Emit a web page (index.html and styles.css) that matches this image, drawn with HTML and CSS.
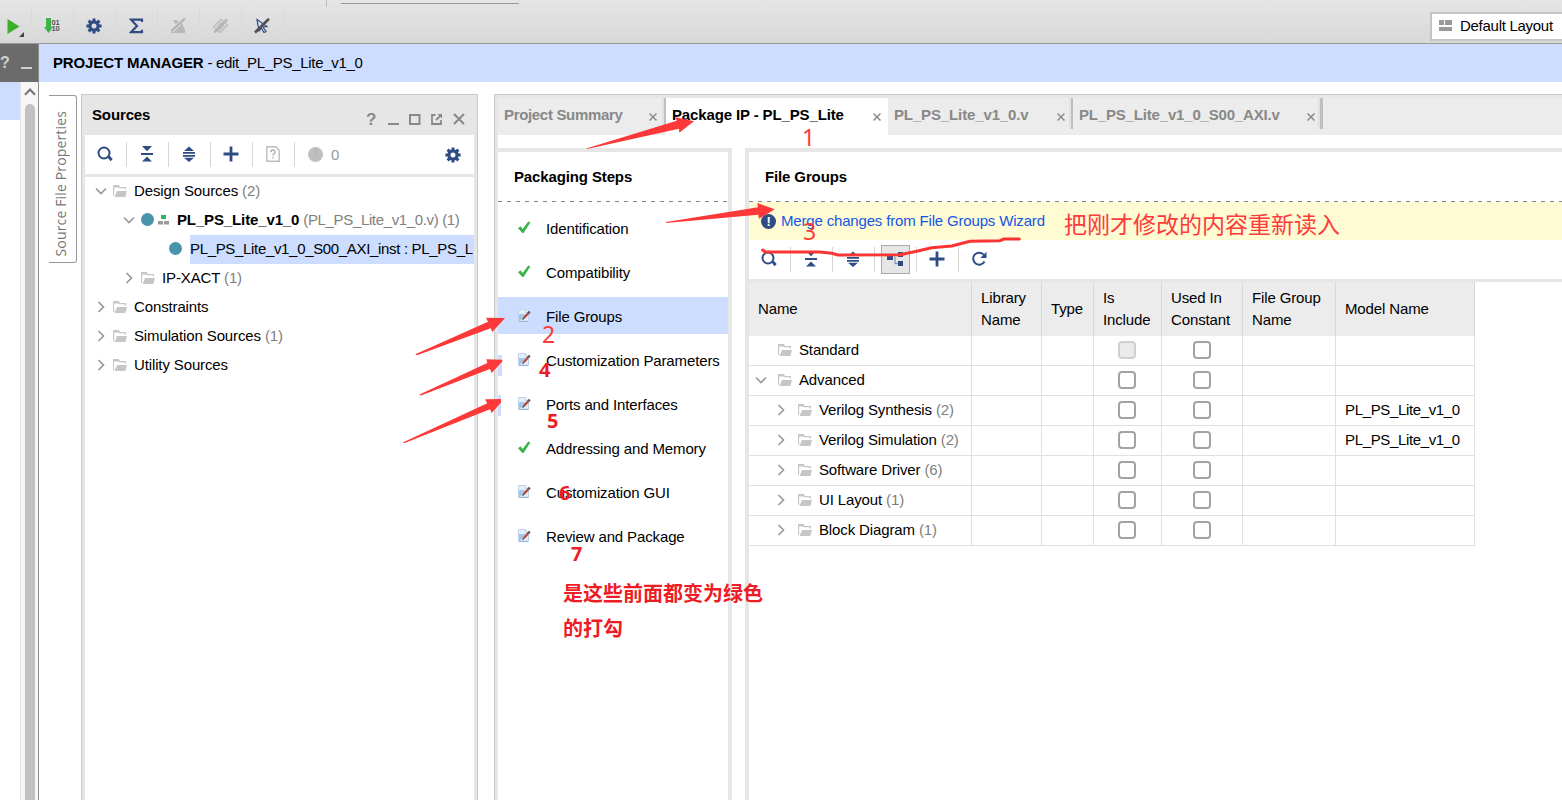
FILE: index.html
```
<!DOCTYPE html>
<html lang="en">
<head>
    <meta charset="UTF-8">
    <meta name="viewport" content="width=device-width, initial-scale=1.0">
    <title>edit_PL_PS_Lite_v1_0</title>
    <link rel="stylesheet" href="styles.css">
</head>
<body>
    <!-- shared icons -->
    <svg class="sprite">
        <symbol id="search" viewBox="0 0 16 16"><circle cx="7" cy="7" r="5.5" fill="none" stroke="currentColor" stroke-width="2"/><path d="M10.500 11.200l2.200-1.400 3 3.200-2.200 2.200z" fill="currentColor"/></symbol>
        <symbol id="collapse" viewBox="0 0 14 16"><path d="M2 0h10L7 5.200zM1 7h12v2H1zM2 15.500h10L7 10.500z" fill="currentColor"/></symbol>
        <symbol id="expand" viewBox="0 0 14 16"><path d="M7 .5L12 5H2zM1 6h12v1.700H1zM1 9h12v1.700H1zM2 11.700h10L7 16z" fill="currentColor"/></symbol>
        <symbol id="plus" viewBox="0 0 16 16"><path d="M6.600 .5h2.800v6.100h6.100v2.800H9.400v6.100H6.600V9.400H.5V6.600h6.100z" fill="currentColor"/></symbol>
        <symbol id="gear" viewBox="0 0 16 16"><circle cx="8" cy="8" r="4.100" fill="none" stroke="currentColor" stroke-width="3.200"/><path d="M8 .4v3M8 12.600v3M.4 8h3M12.600 8h3M2.600 2.600l2 2M11.400 11.400l2 2M2.600 13.400l2-2M11.400 4.600l2-2" stroke="currentColor" stroke-width="3"/></symbol>
        <symbol id="folder" viewBox="0 0 14 12"><path d="M.5 11V.8h5l1 1.800h5.800v2" fill="none" stroke="#c6c6c6" stroke-width="1.300"/><path d="M.5 0h5l1.200 2.600H.5zM4 6h10l-1.600 6H1.600z" fill="#c6c6c6"/></symbol>
        <symbol id="down" viewBox="0 0 12 12"><path d="M1 3.500l5 5 5-5" fill="none" stroke="#999" stroke-width="1.700"/></symbol>
        <symbol id="right" viewBox="0 0 12 12"><path d="M3.500 1l5 5-5 5" fill="none" stroke="#999" stroke-width="1.700"/></symbol>
        <symbol id="check" viewBox="0 0 14 13"><path d="M0 7.200L2.700 5.200l2.400 2.800L11 0l2.300 1L6 12.400H4.700z" fill="#3cb24c"/></symbol>
        <symbol id="edit" viewBox="0 0 13 13"><path d="M.5 .5h7l3 3v9H.5z" fill="#e3effa" stroke="#bdd2e6"/><path d="M1 5h6v3l-6 4z" fill="#a5c8e8"/><path d="M1 12.300h9" stroke="#8fb0cf"/><path d="M7.500 .5v3h3" fill="#fff" stroke="#bdd2e6"/><path d="M6 9l4.600-5.200" stroke="#b5483f" stroke-width="2.200"/><path d="M10.500 4l1.300-1.500" stroke="#4b5364" stroke-width="2.200"/><path d="M4.500 10.700L6 9" stroke="#444" stroke-width="1.200"/></symbol>
        <symbol id="close" viewBox="0 0 8 8"><path d="M.5 .5l7 7M7.500 .5l-7 7" stroke="#8a8a8a" stroke-width="1.500"/></symbol>
    </svg>

    <header class="topbar">
        <div class="menu-edge"><span class="menu-tick"></span><span class="menu-line"></span></div>
        <div class="toolbar">
            <div class="tool run">
                <svg width="25" height="24" viewBox="0 0 25 24"><path d="M7.500 5l12 7.500-12 7.500z" fill="#3fae2a"/><path d="M24 18v5h-5z" fill="#444"/></svg>
            </div>
            <div class="tool">
                <svg width="16" height="16" viewBox="0 0 16 16"><path d="M2 0h5v9h2l-4.500 6L0 9h2z" fill="#3cb44a"/><text class="bits" x="7.500" y="6.500">01</text><text class="bits" x="7.500" y="13">10</text></svg>
            </div>
            <div class="tool"><svg width="16" height="16"><use href="#gear"/></svg></div>
            <div class="tool">
                <svg width="15" height="16" viewBox="0 0 15 16"><path d="M13 4V1.600H2L8 8l-6 6.200h11V11.800" fill="none" stroke="#2f4d84" stroke-width="2.200"/></svg>
            </div>
            <div class="tool">
                <svg width="17" height="16" viewBox="0 0 17 16"><path d="M1 11.500h14V15H1zM3 2h4l6 6 2 4H4l3-4zM9 4h4v4z" fill="#b8b8b8"/><path d="M2 12.500L15 .5" stroke="#dcdcdc" stroke-width="4"/><path d="M2 12.500L15 .5" stroke="#b0b0b0" stroke-width="2"/></svg>
            </div>
            <div class="tool">
                <svg width="17" height="16" viewBox="0 0 17 16"><path d="M1.500 9L9 1.500l6.500 5.500L8 14.500zM5 9l4-4 3 2.500-4 4z" fill="none" stroke="#bcbcbc" stroke-width="1.300"/><path d="M2.500 14.500L15 1.500" stroke="#b0b0b0" stroke-width="2.200"/></svg>
            </div>
            <div class="tool">
                <svg width="16" height="16" viewBox="0 0 16 16"><path d="M3 1.500l10 7-4 .5 3 4.500-2 1-2.500-4.300L5 13z" fill="#dbe4f3" stroke="#2f4d84" stroke-width="1.200"/><path d="M1 14.500L15 .8" stroke="#4e4e4e" stroke-width="2.600"/></svg>
            </div>
            <div class="layout-select">
                <svg width="13" height="11" viewBox="0 0 13 11"><path d="M0 0h5v5H0zM6 0h7v5H6zM0 7h13v4H0z" fill="#999"/></svg>
                <span>Default Layout</span>
            </div>
        </div>
    </header>

    <div class="workspace">
        <aside class="navigator">
            <div class="nav-head"><b>?</b><i></i></div>
            <div class="nav-body">
                <div class="nav-selected"></div>
                <div class="scrollbar">
                    <svg width="12" height="8" viewBox="0 0 12 8"><path d="M1 6.800L6 1.600l5 5.200" fill="none" stroke="#777" stroke-width="2.200"/></svg>
                    <div class="thumb"></div>
                </div>
            </div>
        </aside>

        <main class="manager">
            <div class="manager-title"><b>PROJECT MANAGER</b>&nbsp;- edit_PL_PS_Lite_v1_0</div>
            <div class="panels">
                <div class="side-tab"><span>Source File Properties</span></div>

                <section class="sources">
                    <div class="sources-head">
                        <b>Sources</b>
                        <div class="window-buttons">
                            <b>?</b>
                            <svg width="11" height="12" viewBox="0 0 11 12"><path d="M0 11h11" stroke="#888" stroke-width="2"/></svg>
                            <svg width="12" height="12" viewBox="0 0 12 12"><path d="M1 2h9.500v9H1z" fill="none" stroke="#888" stroke-width="2"/></svg>
                            <svg width="12" height="12" viewBox="0 0 12 12"><path d="M4.500 2H1v9h9V7M5 7l4-4" fill="none" stroke="#888" stroke-width="1.800"/><path d="M6.500 1H11v4.500z" fill="#888"/></svg>
                            <svg width="12" height="12" viewBox="0 0 12 12"><path d="M1 1l10 10M11 1L1 11" stroke="#888" stroke-width="2"/></svg>
                        </div>
                    </div>
                    <div class="icon-bar">
                        <div class="cell"><svg width="16" height="16"><use href="#search"/></svg></div>
                        <div class="cell"><svg width="14" height="16"><use href="#collapse"/></svg></div>
                        <div class="cell"><svg width="14" height="16"><use href="#expand"/></svg></div>
                        <div class="cell"><svg width="16" height="16"><use href="#plus"/></svg></div>
                        <div class="cell">
                            <svg width="14" height="16" viewBox="0 0 14 16"><path d="M.8 .8h9l3.400 3.400v11H.8z" fill="none" stroke="#bbb" stroke-width="1.400"/><path d="M4.800 6.200c0-3 4.400-3 4.400-.2 0 1.800-2.200 1.800-2.200 3.800M7 11v1.600" fill="none" stroke="#aaa" stroke-width="1.400"/></svg>
                        </div>
                        <div class="messages"><i>!</i>0</div>
                        <svg class="settings" width="16" height="16"><use href="#gear"/></svg>
                    </div>
                    <div class="tree">
                        <div class="node"><svg class="arrow"><use href="#down"/></svg><svg class="folder"><use href="#folder"/></svg>Design Sources <em>(2)</em></div>
                        <div class="node level-1">
                            <svg class="arrow"><use href="#down"/></svg><i class="dot"></i>
                            <svg class="top-module" width="11" height="10" viewBox="0 0 11 10"><path d="M3 0h5v4H3z" fill="#2fb457"/><path d="M0 6h5v3.500H0zM6 6h5v3.500H6z" fill="#999"/></svg>
                            <b>PL_PS_Lite_v1_0</b><em class="file">(PL_PS_Lite_v1_0.v) (1)</em>
                        </div>
                        <div class="node level-2"><i class="dot"></i><span class="selected">PL_PS_Lite_v1_0_S00_AXI_inst : PL_PS_L</span></div>
                        <div class="node level-1"><svg class="arrow"><use href="#right"/></svg><svg class="folder"><use href="#folder"/></svg>IP-XACT <em>(1)</em></div>
                        <div class="node"><svg class="arrow"><use href="#right"/></svg><svg class="folder"><use href="#folder"/></svg>Constraints</div>
                        <div class="node"><svg class="arrow"><use href="#right"/></svg><svg class="folder"><use href="#folder"/></svg>Simulation Sources <em>(1)</em></div>
                        <div class="node"><svg class="arrow"><use href="#right"/></svg><svg class="folder"><use href="#folder"/></svg>Utility Sources</div>
                    </div>
                </section>

                <section class="editor">
                    <nav class="tabs">
                        <div class="tab summary">Project Summary<svg><use href="#close"/></svg></div>
                        <div class="tab package active">Package IP - PL_PS_Lite<svg><use href="#close"/></svg></div>
                        <div class="tab verilog">PL_PS_Lite_v1_0.v<svg><use href="#close"/></svg></div>
                        <div class="tab axi">PL_PS_Lite_v1_0_S00_AXI.v<svg><use href="#close"/></svg></div>
                    </nav>
                    <div class="package-ip">
                        <div class="steps">
                            <h2>Packaging Steps</h2>
                            <ul>
                                <li><svg><use href="#check"/></svg>Identification</li>
                                <li><svg><use href="#check"/></svg>Compatibility</li>
                                <li class="current"><svg><use href="#edit"/></svg>File Groups</li>
                                <li><svg><use href="#edit"/></svg>Customization Parameters</li>
                                <li><svg><use href="#edit"/></svg>Ports and Interfaces</li>
                                <li><svg><use href="#check"/></svg>Addressing and Memory</li>
                                <li><svg><use href="#edit"/></svg>Customization GUI</li>
                                <li><svg><use href="#edit"/></svg>Review and Package</li>
                            </ul>
                        </div>
                        <div class="groups">
                            <h2>File Groups</h2>
                            <div class="merge"><i>!</i><a>Merge changes from File Groups Wizard</a></div>
                            <div class="icon-bar">
                                <div class="cell"><svg width="16" height="16"><use href="#search"/></svg></div>
                                <div class="cell"><svg width="14" height="16"><use href="#collapse"/></svg></div>
                                <div class="cell"><svg width="14" height="16"><use href="#expand"/></svg></div>
                                <div class="cell">
                                    <div class="pressed"><svg width="16" height="16" viewBox="0 0 16 16"><path d="M0 4h6v5H0zM11 1h5v5h-5zM11 10h5v5h-5z" fill="#2f4d84"/><path d="M8 6v6.500h3M6 4.500h3M7.500 3.500H11" fill="none" stroke="#8c9dbd" stroke-width="1.300"/></svg></div>
                                </div>
                                <div class="cell"><svg width="16" height="16"><use href="#plus"/></svg></div>
                                <div class="cell last"><svg width="16" height="16" viewBox="0 0 16 16"><path d="M13 4A6 6 0 1 0 13.500 10.500" fill="none" stroke="#2f4d84" stroke-width="2"/><path d="M15.500 .8V7H9.300z" fill="#2f4d84"/></svg></div>
                            </div>
                            <div class="table">
                                <div class="row table-head">
                                    <div>Name</div><div>Library<br>Name</div><div>Type</div><div>Is<br>Include</div><div>Used In<br>Constant</div><div>File Group<br>Name</div><div>Model Name</div>
                                </div>
                                <div class="row"><div><i class="blank"></i><svg class="folder"><use href="#folder"/></svg>Standard</div><div></div><div></div><div class="box"><i class="disabled"></i></div><div class="box"><i></i></div><div></div><div></div></div>
                                <div class="row"><div><svg class="arrow"><use href="#down"/></svg><svg class="folder"><use href="#folder"/></svg>Advanced</div><div></div><div></div><div class="box"><i></i></div><div class="box"><i></i></div><div></div><div></div></div>
                                <div class="row child"><div><svg class="arrow"><use href="#right"/></svg><svg class="folder"><use href="#folder"/></svg>Verilog Synthesis <em>(2)</em></div><div></div><div></div><div class="box"><i></i></div><div class="box"><i></i></div><div></div><div class="model">PL_PS_Lite_v1_0</div></div>
                                <div class="row child"><div><svg class="arrow"><use href="#right"/></svg><svg class="folder"><use href="#folder"/></svg>Verilog Simulation <em>(2)</em></div><div></div><div></div><div class="box"><i></i></div><div class="box"><i></i></div><div></div><div class="model">PL_PS_Lite_v1_0</div></div>
                                <div class="row child"><div><svg class="arrow"><use href="#right"/></svg><svg class="folder"><use href="#folder"/></svg>Software Driver <em>(6)</em></div><div></div><div></div><div class="box"><i></i></div><div class="box"><i></i></div><div></div><div></div></div>
                                <div class="row child"><div><svg class="arrow"><use href="#right"/></svg><svg class="folder"><use href="#folder"/></svg>UI Layout <em>(1)</em></div><div></div><div></div><div class="box"><i></i></div><div class="box"><i></i></div><div></div><div></div></div>
                                <div class="row child"><div><svg class="arrow"><use href="#right"/></svg><svg class="folder"><use href="#folder"/></svg>Block Diagram <em>(1)</em></div><div></div><div></div><div class="box"><i></i></div><div class="box"><i></i></div><div></div><div></div></div>
                            </div>
                        </div>
                    </div>
                </section>
            </div>
        </main>
    </div>

    <!-- red pen notes drawn over the window -->
    <div class="notes">
        <svg width="1562" height="800" viewBox="0 0 1562 800">
            <path d="M498 355h4v21h-4zM498 395h3v21h-3z" fill="#ccddff"/>
            <g fill="#fd3838">
                <path d="M587 148.200L676.700 120.700 675.700 117.300 694 121.300 679.300 132.700 679 128.700 587 149z"/>
                <path d="M666 222L758 207.200 757.300 203 774.700 209.300 759 218.700 758.300 214.700 666 223z"/>
                <path d="M415.300 354.300L488 321.700 486 317.700 505 318 492.300 332 490.700 328.300 417 355.200z"/>
                <path d="M419.500 394.500L487.300 363 486.300 359.300 502.300 359.700V361.500L491.700 373 490 369 421 395.500z"/>
                <path d="M402.700 442.500L487.300 403.300 485 399.300 501 399V402.500L491.700 413 490 409.300 404 443.200z"/>
            </g>
            <path d="M762.700 250l2.600 2H820l11.700 1.300 6.300 1.700 62-.3 16.700-3.400 15-3.600 20-1.700 18.300-4.700 30-.6 4-1.700h15.300" fill="none" stroke="#fd3434" stroke-width="3" stroke-linecap="round" stroke-linejoin="round"/>
        </svg>
        <span class="pen n1">1</span>
        <span class="pen n2">2</span>
        <span class="pen n3">3</span>
        <span class="pen bold n4">4</span>
        <span class="pen bold n5">5</span>
        <span class="pen bold n6">6</span>
        <span class="pen bold n7">7</span>
        <span class="pen reload">把刚才修改的内容重新读入</span>
        <span class="pen bold ticks">是这些前面都变为绿色<br>的打勾</span>
    </div>
</body>
</html>
```
FILE: styles.css
```
* {
    box-sizing: border-box;
}
body {
    display: flex;
    flex-direction: column;
    width: 1562px;
    height: 800px;
    margin: 0;
    overflow: hidden;
    position: relative;
    background-color: #fff;
    font-family: "Liberation Sans", Arial, sans-serif;
    font-size: 15px;
    letter-spacing: -0.13px;
    color: #000;
}
svg {
    display: block;
    flex: none;
}
em, i {
    font-style: normal;
}
em {
    color: #808080;
}
.sprite {
    position: absolute;
    width: 0;
    height: 0;
}

/* top toolbar */
.topbar {
    flex: none;
    height: 44px;
    background: linear-gradient(#e5e5e5, #d8d8d8);
    border-bottom: 1px solid #999;
}
.menu-edge {
    display: flex;
    height: 7px;
    padding-left: 326px;
}
.menu-tick {
    width: 1px;
    height: 7px;
    background: #bbb;
}
.menu-line {
    width: 178px;
    height: 1px;
    margin: 3px 0 0 14px;
    background: #999;
}
.toolbar {
    display: flex;
    height: 36px;
    padding-top: 2px;
}
.tool {
    display: flex;
    align-items: center;
    justify-content: center;
    width: 42px;
    height: 34px;
    padding-right: 1px;
    border-right: 1px solid #dadada;
    color: #2f4d84;
}
.run {
    width: 32px;
    justify-content: flex-start;
}
.bits {
    font-family: "Liberation Sans", Arial, sans-serif;
    font-size: 7.5px;
    font-weight: bold;
    letter-spacing: -0.2px;
    fill: #555;
}
.layout-select {
    display: flex;
    align-items: center;
    gap: 8px;
    width: 140px;
    height: 29px;
    margin: 3px -8px 0 auto;
    padding: 0 0 2px 7px;
    background: #fff;
    border: 2px solid #c4c4c4;
    letter-spacing: -0.28px;
    white-space: nowrap;
}

/* left strip */
.workspace {
    display: flex;
    flex: 1;
    min-height: 0;
}
.navigator {
    width: 39px;
    border-right: 1px solid #8c8c8c;
}
.nav-head {
    display: flex;
    justify-content: space-between;
    height: 38px;
    padding: 10px 6px 0 0;
    background: #6b6b6b;
    color: #d0d0d0;
    font-size: 16px;
}
.nav-head i {
    width: 11px;
    height: 2px;
    margin-top: 13px;
    background: #d0d0d0;
}
.nav-body {
    display: flex;
    height: 718px;
}
.nav-selected {
    width: 20px;
    height: 38px;
    background: #ccddff;
}
.scrollbar {
    display: flex;
    flex-direction: column;
    align-items: center;
    width: 18px;
    padding-top: 6px;
    background: #f6f6f6;
    border-left: 1px solid #e6e6e6;
}
.thumb {
    flex: 1;
    width: 10px;
    margin-top: 8px;
    background: #c1c1c1;
    border-radius: 5px 5px 0 0;
}

/* project manager */
.manager {
    flex: 1;
    display: flex;
    flex-direction: column;
    min-width: 0;
}
.manager-title {
    height: 38px;
    padding-left: 14px;
    line-height: 38px;
    letter-spacing: -0.3px;
    background: #ccddff;
}
.manager-title b {
    letter-spacing: -0.13px;
}
.panels {
    display: flex;
    flex: 1;
    padding: 12px 0 0 10px;
    min-height: 0;
}
.side-tab {
    display: flex;
    align-items: center;
    justify-content: center;
    width: 28px;
    height: 168px;
    margin: 1px 4px 0 0;
    padding: 9px 4px 0 0;
    border: 1px solid #999;
    border-left: 0;
    border-radius: 0 3px 3px 0;
}
.side-tab span {
    writing-mode: vertical-rl;
    transform: rotate(180deg);
    font-family: "Open Sans", sans-serif;
    font-size: 14px;
    letter-spacing: 0.15px;
    color: #777;
    white-space: nowrap;
}
.sources {
    display: flex;
    flex-direction: column;
    width: 397px;
    border: 1px solid #c9c9c9;
    border-bottom: 0;
    background: #e6e6e6;
    padding: 0 3px;
}
.sources-head {
    display: flex;
    justify-content: space-between;
    height: 40px;
    padding: 11px 9px 0 7px;
}
.window-buttons {
    display: flex;
    gap: 10px;
    padding-top: 7px;
    color: #888;
}
.window-buttons b {
    width: 11px;
    margin: -3px 1px 0 0;
    font-size: 17px;
}
.icon-bar {
    display: flex;
    align-items: center;
    height: 39px;
    background: #fff;
    color: #2f4d84;
}
.cell {
    display: flex;
    align-items: center;
    justify-content: center;
    width: 42px;
    height: 25px;
    padding: 0 1px 1px 0;
    border-right: 1px solid #d6d6d6;
}
.cell.last {
    border-right-color: transparent;
}
.messages {
    display: flex;
    align-items: center;
    gap: 8px;
    padding: 0 0 1px 13px;
    color: #999;
}
.messages i {
    width: 15px;
    height: 15px;
    border-radius: 50%;
    background: #bfbfbf;
    color: #b0b0b0;
    font-size: 12px;
    line-height: 15px;
    text-align: center;
}
.settings {
    margin: 0 13px 0 auto;
}
.tree {
    flex: 1;
    margin-top: 3px;
    background: #fff;
    overflow: hidden;
}
.node {
    display: flex;
    align-items: center;
    height: 29px;
    padding: 0 0 2px 10px;
    white-space: pre;
}
.level-1 {
    padding-left: 38px;
}
.level-2 {
    padding-left: 84px;
}
.arrow {
    width: 12px;
    height: 12px;
    margin: 1px 6px 0 0;
}
.folder {
    width: 14px;
    height: 12px;
    margin: 1px 7px 0 0;
}
.dot {
    width: 13px;
    height: 13px;
    flex: none;
    border-radius: 50%;
    background: #4994ad;
}
.top-module {
    margin: 0 8px 0 4px;
}
.file {
    margin-left: 4px;
    letter-spacing: -0.35px;
}
.selected {
    flex: none;
    width: 285px;
    height: 29px;
    margin: 2px 0 0 8px;
    line-height: 28px;
    letter-spacing: -0.33px;
    background: #ccddff;
}

/* editor */
.editor {
    flex: 1;
    display: flex;
    flex-direction: column;
    min-width: 0;
    margin-left: 16px;
    border-top: 1px solid #c9c9c9;
    border-left: 1px solid #c9c9c9;
    background: #e6e6e6;
    padding: 3px 0 0 3px;
}
.tabs {
    display: flex;
    height: 37px;
    background: #ececec;
    font-weight: bold;
    color: #888;
}
.tab {
    display: flex;
    justify-content: space-between;
    padding: 8px 7px 0 6px;
    white-space: nowrap;
}
.tab svg {
    width: 8px;
    height: 8px;
    margin-top: 7px;
}
.tab.summary, .tab.verilog, .tab.axi {
    height: 31px;
    border-right: 2px solid #bfbfbf;
    box-shadow: inset -2px 0 #e2e2e2;
}
.tab.summary {
    width: 168px;
    letter-spacing: -0.33px;
}
.tab.package {
    width: 222px;
}
.tab.verilog {
    width: 185px;
    padding-right: 6px;
}
.tab.axi {
    width: 250px;
    border-right-width: 3px;
    padding-right: 5px;
    letter-spacing: -0.18px;
}
.tab.active {
    height: 37px;
    background: #fff;
    color: #000;
}
.package-ip {
    flex: 1;
    display: flex;
    gap: 13px;
    padding-top: 13px;
    background: #fff;
}
.steps {
    width: 234px;
    border-top: 4px solid #e6e6e6;
    border-right: 4px solid #e6e6e6;
}
.groups {
    flex: 1;
    border-top: 4px solid #e6e6e6;
    border-left: 4px solid #e6e6e6;
}
h2 {
    height: 50px;
    margin: 0;
    padding-left: 16px;
    font-size: 15px;
    line-height: 50px;
    background: repeating-linear-gradient(90deg, #888 0 4px, transparent 4px 9px) bottom / 100% 1px no-repeat;
}
.steps ul {
    display: flex;
    flex-direction: column;
    gap: 7px;
    margin: 0;
    padding: 7px 0 0;
    list-style: none;
}
.steps li {
    display: flex;
    align-items: center;
    height: 37px;
    padding: 2px 0 0 20px;
    white-space: nowrap;
}
.steps li svg {
    width: 13px;
    height: 13px;
    margin: -2px 15px 0 0;
}
.steps li.current {
    background: #ccddff;
}
.merge {
    display: flex;
    align-items: center;
    gap: 5px;
    height: 38px;
    padding-left: 12px;
    background: #fffbd3;
    letter-spacing: -0.17px;
    color: #1356e8;
}
.merge a {
    margin-top: -2px;
}
.merge i {
    width: 15px;
    height: 15px;
    border-radius: 50%;
    background: #2f4d84;
    color: #fff;
    font-size: 13px;
    font-weight: bold;
    line-height: 15px;
    text-align: center;
}
.pressed {
    display: flex;
    align-items: center;
    justify-content: center;
    flex: none;
    width: 29px;
    height: 29px;
    background: #e6e6e6;
    border: 1px solid #aaa;
}

/* file groups table */
.table {
    border-top: 3px solid #e6e6e6;
}
.row {
    display: grid;
    grid-template-columns: 223px 70px 52px 68px 81px 93px 139px;
    width: 726px;
    height: 30px;
}
.row > div {
    display: flex;
    align-items: center;
    padding: 0 0 2px 9px;
    border-right: 1px solid #e0e0e0;
    border-bottom: 1px solid #e0e0e0;
    white-space: pre;
}
.row > div:first-child {
    padding-left: 6px;
}
.row .arrow {
    margin-right: 11px;
}
.row .folder {
    margin-right: 7px;
}
.row.child > div:first-child {
    padding-left: 26px;
}
.row > .model {
    letter-spacing: -0.35px;
}
.blank {
    width: 23px;
}
.table-head {
    height: 54px;
    background: #ececec;
    line-height: 22px;
}
.table-head > div {
    padding-bottom: 1px;
    border-bottom: 0;
    border-right-color: #d8d8d8;
}
.table-head > div:first-child {
    padding-left: 9px;
}
.row > .box {
    justify-content: center;
    padding: 0 1px 1px 0;
}
.box i {
    width: 18px;
    height: 18px;
    border: 2px solid #a3a3a3;
    border-radius: 4px;
    background: #fff;
}
.box i.disabled {
    border-color: #d0d0d0;
    background: #ebebed;
}

/* pen notes */
.notes {
    position: absolute;
    inset: 0;
    pointer-events: none;
    letter-spacing: 0;
}
.pen {
    position: absolute;
    font-family: "Noto Sans", "Noto Sans CJK SC", sans-serif;
    font-size: 23px;
    line-height: 28px;
    color: #fd3b3b;
    white-space: nowrap;
}
.bold {
    font-family: "Open Sans", "Noto Sans CJK SC", sans-serif;
    font-size: 20px;
    font-weight: bold;
    color: #ee1c25;
}
.n1 { left: 802px; top: 123px; }
.n2 { left: 542px; top: 320px; }
.n3 { left: 803px; top: 217px; }
.n4 { left: 539px; top: 356px; }
.n5 { left: 547px; top: 407px; }
.n6 { left: 559px; top: 479px; }
.n7 { left: 571px; top: 540px; }
.reload { left: 1064px; top: 210px; }
.ticks {
    left: 563px;
    top: 576px;
    line-height: 35px;
}
```
